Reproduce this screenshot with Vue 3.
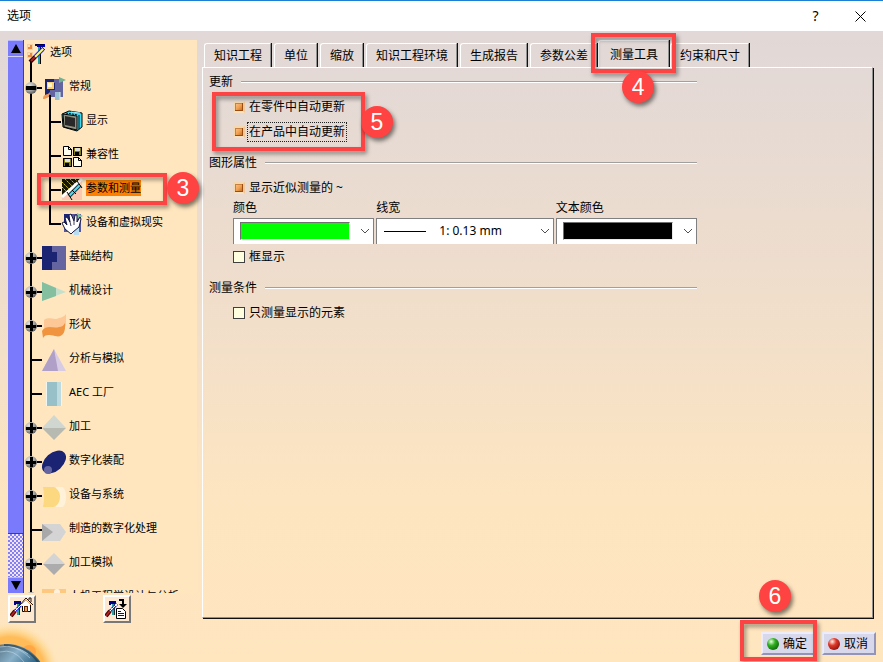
<template>
  <div class="window">
    <header class="titlebar">
      <h1>选项</h1>
      <button aria-label="帮助">?</button>
      <button aria-label="关闭">
        <svg width="11" height="11" viewBox="0 0 11 11">
          <path d="M0.5 0.5L10.5 10.5M10.5 0.5L0.5 10.5" stroke="#000" />
        </svg>
      </button>
    </header>

    <div class="body">
      <!-- 左侧选项树 -->
      <aside class="sidebar">
        <div class="tree-box">
          <div class="scrollbar">
            <button aria-label="向上滚动">
              <svg width="10" height="9" viewBox="0 0 10 9"><path d="M5 0L10 9H0Z" /></svg>
            </button>
            <div class="thumb"></div>
            <div class="track"></div>
            <button aria-label="向下滚动">
              <svg width="10" height="9" viewBox="0 0 10 9"><path d="M0 0H10L5 9Z" /></svg>
            </button>
          </div>

          <ul class="tree">
            <li class="node root">
              <svg class="root-icon" width="23" height="31" viewBox="0 0 23 31" v-html="icons.root"></svg>
              <button class="label">选项</button>
            </li>
            <li v-for="node in nodes" :key="node.text" class="node">
              <div class="gutter">
                <svg v-if="node.child" width="37" height="34" viewBox="0 0 37 34">
                  <path :d="childLines(node)" fill="none" stroke="#000" stroke-width="2" />
                </svg>
                <svg v-else width="18" height="34" viewBox="0 0 18 34">
                  <path d="M7 0V34M7 17H18" fill="none" stroke="#000" stroke-width="2" />
                </svg>
                <button
                  v-if="node.toggle"
                  class="toggle"
                  :aria-label="node.toggle === 'minus' ? '折叠' : '展开'"
                >
                  <svg width="14" height="14" viewBox="0 0 14 14">
                    <defs>
                      <radialGradient id="knob" cx="0.35" cy="0.3" r="0.75">
                        <stop offset="0" stop-color="#e4e4e4" />
                        <stop offset="0.6" stop-color="#a0a0a0" />
                        <stop offset="1" stop-color="#585858" />
                      </radialGradient>
                    </defs>
                    <circle cx="7" cy="7" r="6" fill="url(#knob)" />
                    <path
                      :d="node.toggle === 'minus' ? 'M2 5H12V9H2Z' : 'M2 6H6V2H9V6H12V9H9V12H6V9H2Z'"
                    />
                  </svg>
                </button>
              </div>
              <svg
                :width="node.child ? 22 : 24"
                height="34"
                :viewBox="node.child ? '0 0 22 34' : '0 0 24 34'"
                v-html="icons[node.icon]"
              ></svg>
              <button class="label" :class="{ selected: node.selected }">{{ node.text }}</button>
              <template v-if="node.selected">
                <i class="mark mark-node"></i>
                <b class="badge badge-node">3</b>
              </template>
            </li>
          </ul>
        </div>

        <div class="tree-tools">
          <button aria-label="重置参数">
            <svg width="24" height="24" viewBox="0 0 24 24">
              <g v-html="icons.tools"></g>
              <path d="M11 7L16 2L22 8H20V14H12V8Z" fill="#fff" />
              <path d="M20.500 8V14.500H12.500V9" fill="none" stroke="#000" />
              <path d="M10 8L16 1L23 8M19 3V1H21V5" fill="none" stroke="#201008" />
              <path d="M12 7L16 3L21 8" fill="none" stroke="#f0a060" />
              <rect x="14.500" y="9.500" width="3" height="5" fill="#f0a060" stroke="#602800" />
            </svg>
          </button>
          <button aria-label="转储参数">
            <svg width="24" height="24" viewBox="0 0 24 24">
              <g v-html="icons.tools"></g>
              <path d="M14 3H18V7" fill="none" stroke="#000" stroke-width="2" />
              <path d="M14 7H22L18 11Z" />
              <path d="M11.500 11.500H17.500L20.500 14.500V21.500H11.500Z" fill="#fff" stroke="#000" />
              <path d="M13 14.500H16M13 16.500H19M13 18.500H19" stroke="#0000e0" />
            </svg>
          </button>
        </div>
      </aside>

      <!-- 右侧选项卡 -->
      <main class="content">
        <nav class="tabs">
          <button v-for="tab in tabs" :key="tab" class="tab" :class="{ active: tab === activeTab }">
            {{ tab }}
            <template v-if="tab === activeTab">
              <i class="mark mark-tab"></i>
              <b class="badge badge-tab">4</b>
            </template>
          </button>
        </nav>

        <div class="panel">
          <section class="group">
            <h2>更新</h2>
            <div class="group-body">
              <label class="check"><input v-model="form.partUpdate" type="checkbox" /><span>在零件中自动更新</span></label>
              <label class="check"><input v-model="form.productUpdate" type="checkbox" /><span class="focused">在产品中自动更新</span></label>
              <i class="mark mark-update"></i>
              <b class="badge badge-update">5</b>
            </div>
          </section>

          <section class="group">
            <h2>图形属性</h2>
            <div class="group-body">
              <label class="check"><input v-model="form.approx" type="checkbox" /><span>显示近似测量的 ~</span></label>
              <div class="fields">
                <div class="field">
                  <label for="color">颜色</label>
                  <div class="combo">
                    <select id="color" v-model="form.color">
                      <option value="#00ff00"></option>
                    </select>
                    <span class="swatch" :style="{ background: form.color }"></span>
                    <svg class="arrow" width="10" height="6" viewBox="0 0 10 6"><path d="M1 1L5 5L9 1" /></svg>
                  </div>
                </div>
                <div class="field">
                  <label for="line">线宽</label>
                  <div class="combo">
                    <select id="line" v-model="form.line">
                      <option value="1">1: 0.13 mm</option>
                    </select>
                    <span class="stroke"></span>
                    <svg class="arrow" width="10" height="6" viewBox="0 0 10 6"><path d="M1 1L5 5L9 1" /></svg>
                  </div>
                </div>
                <div class="field">
                  <label for="text-color">文本颜色</label>
                  <div class="combo">
                    <select id="text-color" v-model="form.textColor">
                      <option value="#000000"></option>
                    </select>
                    <span class="swatch" :style="{ background: form.textColor }"></span>
                    <svg class="arrow" width="10" height="6" viewBox="0 0 10 6"><path d="M1 1L5 5L9 1" /></svg>
                  </div>
                </div>
              </div>
              <label class="check"><input v-model="form.box" type="checkbox" /><span>框显示</span></label>
            </div>
          </section>

          <section class="group">
            <h2>测量条件</h2>
            <div class="group-body">
              <label class="check"><input v-model="form.visibleOnly" type="checkbox" /><span>只测量显示的元素</span></label>
            </div>
          </section>
        </div>

        <footer class="actions">
          <div class="ok">
            <button><i class="ball green"></i>确定</button>
            <i class="mark mark-ok"></i>
            <b class="badge badge-ok">6</b>
          </div>
          <button><i class="ball red"></i>取消</button>
        </footer>
      </main>
    </div>

    <svg class="globe" width="60" height="44" viewBox="0 0 60 44">
      <defs>
        <radialGradient id="glow">
          <stop offset="0.7" stop-color="#ffbc58" />
          <stop offset="0.85" stop-color="#ffd890" stop-opacity="0.7" />
          <stop offset="1" stop-color="#ffe6bf" stop-opacity="0" />
        </radialGradient>
        <linearGradient id="sea" x1="0.3" y1="0" x2="0.9" y2="0.5">
          <stop offset="0" stop-color="#4c6474" />
          <stop offset="0.4" stop-color="#88b0c8" />
          <stop offset="0.7" stop-color="#3c7090" />
          <stop offset="1" stop-color="#102840" />
        </linearGradient>
      </defs>
      <circle cx="10" cy="54" r="50" fill="url(#glow)" />
      <circle cx="29" cy="34" r="7" fill="#ff9a38" opacity="0.6" />
      <circle cx="8" cy="64" r="38" fill="url(#sea)" />
      <path d="M0 29Q14 26 28 36M0 34Q14 30 24 44M8 28Q20 30 30 40" fill="none" stroke="#d0e4f0" opacity="0.5" />
      <path d="M4 27Q26 27 38 44" fill="none" stroke="#28404c" stroke-width="2" opacity="0.7" />
    </svg>
  </div>
</template>

<script setup>
import { ref, reactive } from 'vue'

const tabs = ['知识工程', '单位', '缩放', '知识工程环境', '生成报告', '参数公差', '测量工具', '约束和尺寸']
const activeTab = ref('测量工具')

const form = reactive({
  partUpdate: true,
  productUpdate: true,
  approx: true,
  color: '#00ff00',
  line: '1',
  textColor: '#000000',
  box: false,
  visibleOnly: false
})

const nodes = [
  { text: '常规', icon: 'general', toggle: 'minus' },
  { text: '显示', icon: 'display', child: true },
  { text: '兼容性', icon: 'compat', child: true },
  { text: '参数和测量', icon: 'measure', child: true, selected: true },
  { text: '设备和虚拟现实', icon: 'device', child: true, last: true },
  { text: '基础结构', icon: 'infra', toggle: 'plus' },
  { text: '机械设计', icon: 'mechanical', toggle: 'plus' },
  { text: '形状', icon: 'shape', toggle: 'plus' },
  { text: '分析与模拟', icon: 'analysis' },
  { text: 'AEC 工厂', icon: 'plant' },
  { text: '加工', icon: 'machining', toggle: 'plus' },
  { text: '数字化装配', icon: 'mockup', toggle: 'plus' },
  { text: '设备与系统', icon: 'systems', toggle: 'plus' },
  { text: '制造的数字化处理', icon: 'process' },
  { text: '加工模拟', icon: 'simulation', toggle: 'plus' },
  { text: '人机工程学设计与分析', icon: 'human', toggle: 'plus' }
]

// 子节点：主干线 + 二级分支线
function childLines(node) {
  return `M7 0V34M26 0V${node.last ? 18 : 34}M26 17H37`
}

const icons = {
  root: `
    <rect x="3" y="4" width="6" height="6" fill="#f8d0a0"/><rect x="4" y="5" width="4" height="4" fill="#e88840"/><rect x="4" y="5" width="2" height="2" fill="#ffe0b8"/>
    <rect x="3" y="12" width="6" height="6" fill="#f8d0a0"/><rect x="4" y="13" width="4" height="4" fill="#e88840"/><rect x="4" y="13" width="2" height="2" fill="#ffe0b8"/>
    <path d="M7 21V31" stroke="#000" stroke-width="2"/>
    <rect x="14" y="6" width="2" height="18" fill="#20a0a0"/><rect x="16" y="6" width="1" height="18" fill="#000"/>
    <path d="M11 4H21V7H13V6H11Z" fill="#0000c0"/><path d="M12 4.500H20" stroke="#000040"/>
    <path d="M11 17L19 9" stroke="#2020ff" stroke-width="4"/><path d="M11 17L19 9" stroke="#ffff60" stroke-width="2"/>
    <path d="M18 7L21 10" stroke="#2020ff"/>
    <path d="M6 22L11 17" stroke="#200000" stroke-width="4"/><path d="M7 21L11 17" stroke="#b02020" stroke-width="2"/>`,
  tools: `
    <rect x="7" y="7" width="2" height="11" fill="#30a0a0"/><rect x="9" y="7" width="1" height="11" fill="#203030"/>
    <path d="M4 4H11V7H6V8H4Z" fill="#000080"/>
    <path d="M5 14L12 7" stroke="#2020e0" stroke-width="3" stroke-dasharray="2 1"/><path d="M5 14L13 6" stroke="#fff"/>
    <path d="M1 19L5 14" stroke="#400000" stroke-width="4"/><path d="M1 19L5 14" stroke="#b82020" stroke-width="2"/>`,
  general: `
    <rect x="3" y="8" width="18" height="18" fill="#6464a0"/><path d="M3 8H12V12H13V19H8V24H3Z" fill="#1a2472"/>
    <rect x="5" y="11" width="7" height="7" fill="#fcd070"/><rect x="6" y="12" width="4" height="4" fill="#fff4d0"/>
    <path d="M17 6L24 9L17 12Z" fill="#74b090"/>
    <path d="M1 27C2 22 5 25 8 21C8 26 5 28 1 28Z" fill="#f09850"/>
    <rect x="13" y="21" width="5" height="8" fill="#98c0d0"/><path d="M18 21V29" stroke="#d8ecf0"/>
    <path d="M8 24V34" stroke="#000" stroke-width="2"/>`,
  display: `
    <path d="M1 9L8 6L21 8V22L16 26L2 22Z" fill="#40d8f0" stroke="#000"/>
    <path d="M2 9L16 11V25L3 22Z" fill="#909080" stroke="#000"/><path d="M4 11L14 13V22L4 20Z" fill="#282828"/>
    <path d="M18 10V24" stroke="#000"/><path d="M5 8L17 10" stroke="#000" stroke-dasharray="2 1" fill="none"/><path d="M10 7L19 8" stroke="#a0f0ff"/>`,
  compat: `
    <path d="M2.500 7.500H7.500L10.500 10.500V16.500H2.500Z" fill="#fffff0" stroke="#000"/><path d="M7.500 7V10.500H11" fill="none" stroke="#000"/>
    <rect x="12.500" y="8.500" width="8" height="8" fill="#808020" stroke="#000"/><rect x="14" y="9" width="5" height="3" fill="#e0e0e0"/><rect x="14" y="13" width="4" height="3" fill="#000"/>
    <rect x="2.500" y="19.500" width="8" height="8" fill="#808020" stroke="#000"/><rect x="4" y="20" width="5" height="3" fill="#e0e0e0"/><rect x="4" y="24" width="4" height="3" fill="#000"/>
    <path d="M12.500 18.500H17.500L20.500 21.500V27.500H12.500Z" fill="#fffff0" stroke="#000"/><path d="M17.500 18V21.500H21" fill="none" stroke="#000"/>`,
  measure: `
    <rect x="1" y="6" width="20" height="21" fill="#fcc8b0"/>
    <path d="M1 6H19L1 22Z" fill="#181800"/>
    <path d="M1 9L9 17M1 14L6 19M4 6L12 14M9 6L15 12M14 6L18 10" stroke="#e0d820" stroke-dasharray="2 1"/>
    <path d="M21 6L1 24" stroke="#fff" stroke-width="3"/>
    <path d="M8 23L19 12" stroke="#104048" stroke-width="4"/><path d="M8 23L19 12" stroke="#60d8f0" stroke-width="2"/>
    <path d="M6 19L11 27M16 8L21 15M11 17L15 21" stroke="#000"/>`,
  device: `
    <rect x="3" y="7" width="17" height="18" fill="#5858a0"/><rect x="3" y="7" width="8" height="9" fill="#1a2472"/>
    <path d="M16 6L22 9L16 12Z" fill="#80c0a0"/><rect x="13" y="20" width="5" height="8" fill="#b8dcf0"/>
    <path d="M1 16L3 15L6 18L4 11L6 10L9 15L8 8L10 7L13 14L14 8L16 8L16 15L19 10L20 12L18 20L12 25L10 27L4 22Z" fill="#fff" stroke="#181840"/>
    <path d="M9 15L10 19M13 14L13 18" stroke="#404060"/>`,
  infra: `<rect x="0" y="5" width="24" height="24" fill="#6464a0"/><path d="M0 5H10V11H15V21H10V29H0Z" fill="#1a2472"/>`,
  mechanical: `<path d="M0 7L24 17L0 26Z" fill="#c4e0cc"/><path d="M0 7L14 13V21L0 26Z" fill="#84bfa0"/>`,
  shape: `
    <path d="M2 11C8 7 12 12 17 9Q22 8 24 5V16C20 22 16 18 11 19Q5 18 2 19Z" fill="#fdc896"/>
    <path d="M0 22C4 15 12 20 17 18Q21 18 23 14C24 24 20 29 13 27C7 26 4 25 1 29Z" fill="#f09440"/>`,
  analysis: `<path d="M12 6L24 28H0Z" fill="#d8cce4"/><path d="M12 6L16 28H0Z" fill="#b0a0c8"/>`,
  plant: `<rect x="4" y="5" width="16" height="24" fill="#eef6f4"/><rect x="5" y="5" width="10" height="24" fill="#98c0c8"/><rect x="15" y="5" width="4" height="24" fill="#bcdadf"/>`,
  machining: `<path d="M12 4L24 17H0Z" fill="#d0d6d0"/><path d="M0 17H24L12 29Z" fill="#b6bab0"/>`,
  mockup: `<ellipse cx="12" cy="17" rx="14" ry="9" transform="rotate(-42 12 17)" fill="#1a2472"/><circle cx="6" cy="25" r="4" fill="#6464a0"/>`,
  systems: `<path d="M14 8H21Q24 11 24 18Q24 25 21 28H14Z" fill="#fff2d8"/><path d="M1 8H12Q18 11 18 18Q18 25 12 28H1Q3 18 1 8Z" fill="#fcd880"/>`,
  process: `<path d="M0 11H18L24 19L18 28H0Z" fill="#d4d4d4"/><path d="M0 11L11 19L0 28Z" fill="#a8a8a8"/>`,
  simulation: `<path d="M12 6L23 17H1Z" fill="#d4d4d4"/><path d="M1 17H23L12 28Z" fill="#acacac"/>`,
  human: `<rect x="0" y="8" width="24" height="24" fill="#fdc880"/><circle cx="15" cy="11" r="3" fill="#fff0dc"/><path d="M10 16H20V30H10Z" fill="#fff0dc"/>`
}
</script>

<style>
body {
  margin: 0;
}
</style>

<style scoped>
.window {
  position: relative;
  display: flex;
  flex-direction: column;
  height: 100vh;
  overflow: hidden;
  font-family: 'Noto Sans', 'Noto Sans CJK SC', sans-serif;
  font-size: 12px;
  line-height: 16px;
  color: #000;
  background: linear-gradient(#e1d8d7 5%, #eeddcd 40%, #fde5c1 75%, #ffe6bf);
}
button {
  padding: 0;
  border: none;
  background: none;
  font: inherit;
  color: inherit;
  cursor: pointer;
}
svg {
  display: block;
}
.titlebar {
  display: flex;
  height: 30px;
  border-top: 1px solid #1b80d4;
  background: #fff;
}
.titlebar h1 {
  flex: 1;
  margin: 0;
  padding-left: 7px;
  font-size: 12px;
  font-weight: normal;
  line-height: 29px;
}
.titlebar button {
  display: flex;
  align-items: center;
  justify-content: center;
  width: 45px;
  font-size: 14px;
}
.body {
  display: flex;
  flex: 1;
  min-height: 0;
  gap: 5px;
  padding: 9px 7px 0 8px;
}

/* 选项树 */
.sidebar {
  display: flex;
  flex-direction: column;
  width: 189px;
  padding-bottom: 39px;
}
.tree-box {
  display: flex;
  flex: 1;
  min-height: 0;
  background: #ffe6bf;
}
.scrollbar {
  display: flex;
  flex-direction: column;
  width: 15px;
  border-right: 1px solid #3c3c9c;
}
.scrollbar button {
  display: flex;
  align-items: center;
  justify-content: center;
  height: 16px;
  background: #7a7afc;
  border-top: 1px solid #b8b8ff;
}
.thumb {
  flex: 478;
  background: #7a7afc;
  border-top: 1px solid #d0d0ff;
  border-bottom: 1px solid #3c3c9c;
}
.track {
  flex: 43;
  background: repeating-conic-gradient(#8080fc 0 25%, #f4e4e8 0 50%) 0 0 / 4px 4px;
}
.tree {
  position: relative;
  z-index: 1;
  flex: 1;
  margin: 0;
  padding: 0;
  list-style: none;
  font-size: 11px;
  overflow-x: visible;
  overflow-y: clip;
}
.node {
  position: relative;
  display: flex;
  align-items: center;
  height: 34px;
  white-space: nowrap;
}
.node.root {
  height: 31px;
}
.gutter {
  display: grid;
  justify-items: start;
}
.gutter > * {
  grid-area: 1 / 1;
}
.toggle {
  display: flex;
  align-items: center;
}
.label {
  margin: 0 0 4px 3px;
  line-height: 16px;
}
.root .label {
  margin-bottom: 7px;
}
.label.selected {
  background: #ff8000;
}
.tree-tools {
  display: flex;
  gap: 67px;
  margin-top: 2px;
}
.tree-tools button {
  width: 28px;
  height: 28px;
  border: 2px solid;
  border-color: #fff #787878 #787878 #fff;
  background: #ffe8d0;
}

/* 选项卡 */
.content {
  display: flex;
  flex: 1;
  flex-direction: column;
  min-width: 0;
  padding-bottom: 7px;
}
.tabs {
  display: flex;
  align-items: flex-end;
  height: 27px;
  padding-left: 2px;
}
.tab {
  position: relative;
  height: 24px;
  margin-right: 3px;
  padding: 0 8px 0 9px;
  border-top: 1px solid #fff;
  border-left: 1px solid #fff;
  border-right: 1px solid #909090;
  border-radius: 3px 0 0 0;
  box-shadow: 1px 0 #101010;
  white-space: nowrap;
}
.tab.active {
  height: 27px;
  margin-left: -2px;
  padding: 2px 10px 0 11px;
  margin-right: 1px;
}
.panel {
  flex: 1;
  margin: 0 3px 1px 0;
  padding: 4px 6px;
  border: 1px solid;
  border-color: #fff #909090 #909090 #fff;
  box-shadow: 1px 1px #101010;
}
.group {
  max-width: 488px;
  margin-bottom: 9px;
}
.group h2 {
  display: flex;
  align-items: center;
  gap: 8px;
  height: 20px;
  margin: 0 0 2px;
  font-size: 12px;
  font-weight: normal;
}
.group h2::after {
  content: '';
  flex: 1;
  height: 1px;
  background: #a0a0a0;
  border-bottom: 1px solid #fff;
}
.group-body {
  position: relative;
  padding-left: 24px;
}
.check {
  display: flex;
  align-items: center;
  gap: 3px;
  height: 25px;
}
.check input {
  appearance: none;
  box-sizing: border-box;
  width: 12px;
  height: 12px;
  margin: 0;
  border: 1px solid #404040;
  background: #ffffe0;
}
.check input:checked {
  border: 2px solid;
  border-color: #f4d8b0 #f0c898 #f8e0c0 #f4d8b0;
  background: linear-gradient(135deg, #ffc890, #f0a050 50%, #b86018) padding-box;
  box-shadow: inset -1px -1px #9c4c10, inset 1px 1px #c88040;
}
.check span {
  padding: 1px;
}
.check .focused {
  outline: 1px dotted #202020;
}
.fields {
  display: grid;
  grid-template-columns: 141fr 177fr 141fr;
  gap: 2px;
}
.field > label {
  display: block;
  height: 18px;
}
.combo {
  display: grid;
  align-items: center;
  height: 26px;
}
.combo > * {
  grid-area: 1 / 1;
}
.combo select {
  appearance: none;
  width: 100%;
  height: 26px;
  padding: 0 0 2px 62px;
  border: 1px solid #808080;
  border-bottom: none;
  border-radius: 0;
  background: #fff;
  font: inherit;
}
.swatch,
.stroke,
.arrow {
  position: relative;
  pointer-events: none;
}
.swatch {
  height: 16px;
  margin: 0 24px 0 7px;
  border: 1px solid;
  border-color: #707070 #e8e8e8 #e8e8e8 #707070;
}
.stroke {
  width: 42px;
  height: 1px;
  margin-left: 8px;
  background: #000;
}
.arrow {
  justify-self: end;
  margin-right: 4px;
}
.arrow path {
  fill: none;
  stroke: #505050;
}

/* 底部按钮 */
.actions {
  display: flex;
  justify-content: flex-end;
  gap: 7px;
  margin-top: 13px;
}
.actions button {
  display: flex;
  align-items: center;
  gap: 4px;
  height: 23px;
  padding: 0 6px 0 4px;
  border: 2px solid;
  border-color: #ececfa #9494b8 #9494b8 #ececfa;
  background: #d8d8ec;
}
.ball {
  width: 12px;
  height: 12px;
  border-radius: 50%;
}
.green {
  background: radial-gradient(circle at 35% 30%, #e8ffe0, #30b020 35%, #004800);
}
.red {
  background: radial-gradient(circle at 35% 30%, #fff0e8, #e03828 35%, #680000);
}
.ok {
  position: relative;
}
.globe {
  position: absolute;
  left: 0;
  bottom: 0;
}

/* 步骤标注 */
.mark,
.badge {
  position: absolute;
  z-index: 2;
  box-sizing: border-box;
  pointer-events: none;
}
.mark {
  border: 4px solid #fc4444;
  filter: drop-shadow(2px 3px 2px rgba(0, 0, 0, 0.4));
}
.badge {
  width: 32px;
  height: 32px;
  border-radius: 50%;
  background: #ff4242;
  box-shadow: 2px 3px 4px rgba(0, 0, 0, 0.5);
  color: #fff;
  font: 23px/32px 'Liberation Sans', sans-serif;
  text-align: center;
}
.mark-node {
  left: 13px;
  top: 0;
  width: 130px;
  height: 32px;
}
.badge-node {
  left: 143px;
  top: -1px;
}
.mark-tab {
  left: -8px;
  top: -8px;
  width: 85px;
  height: 40px;
}
.badge-tab {
  left: 23px;
  top: 30px;
}
.mark-update {
  left: 3px;
  top: -2px;
  width: 153px;
  height: 59px;
}
.badge-update {
  left: 152px;
  top: 12px;
}
.mark-ok {
  left: -21px;
  top: -12px;
  width: 77px;
  height: 41px;
}
.badge-ok {
  left: -2px;
  top: -52px;
}
</style>
